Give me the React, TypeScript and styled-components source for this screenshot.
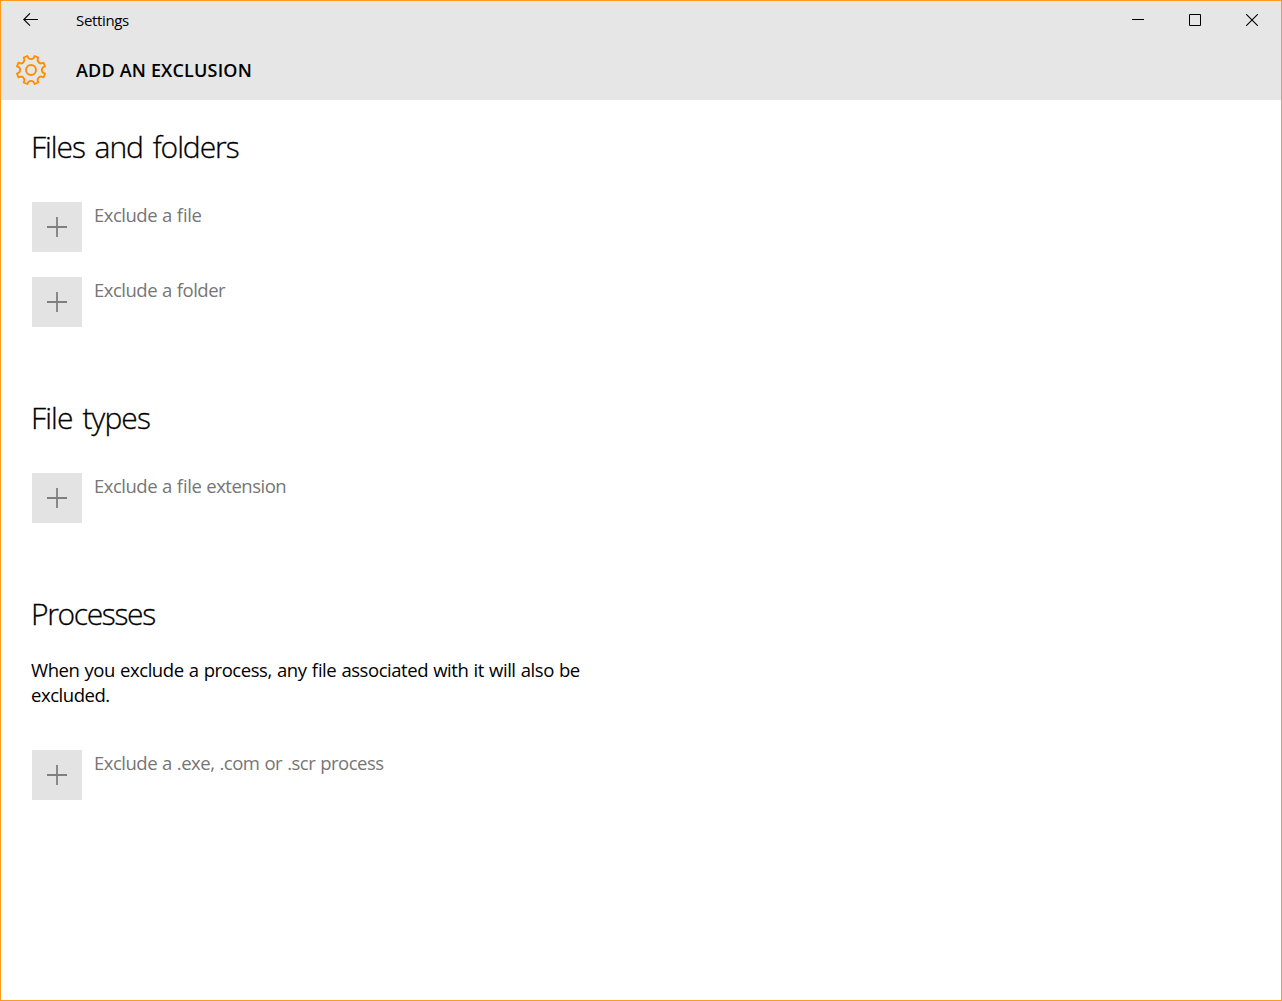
import { FC } from 'react';
import styled, { createGlobalStyle } from 'styled-components';

type ExclusionSection = {
  title: string;
  tracking: number;
  description?: string;
  actions: string[];
};

const sections: ExclusionSection[] = [
  {
    title: 'Files and folders',
    tracking: -1.05,
    actions: ['Exclude a file', 'Exclude a folder'],
  },
  {
    title: 'File types',
    tracking: -0.9,
    actions: ['Exclude a file extension'],
  },
  {
    title: 'Processes',
    tracking: -1.35,
    description:
      'When you exclude a process, any file associated with it will also be excluded.',
    actions: ['Exclude a .exe, .com or .scr process'],
  },
];

// eight teeth, with a rounded notch between each pair
const gearPath = () => {
  const point = (radius: number, degrees: number) => {
    const angle = (degrees * Math.PI) / 180;
    return `${(16 + radius * Math.sin(angle)).toFixed(2)} ${(
      16 -
      radius * Math.cos(angle)
    ).toFixed(2)}`;
  };
  const teeth = Array.from({ length: 8 }, (_, i) => {
    const a = i * 45 + 22.5;
    return `${point(14.5, a - 8)} L${point(14.5, a + 8)} L${point(
      11.9,
      a + 10.5
    )} Q${point(10, a + 22.5)} ${point(11.9, a + 34.5)}`;
  });
  return `M${teeth.join(' L')} Z`;
};

const GearIcon: FC = () => (
  <svg width="32" height="32" viewBox="0 0 32 32" fill="none">
    <path
      d={gearPath()}
      stroke="#ff8c00"
      strokeWidth="1.8"
      strokeLinejoin="round"
    />
    <circle cx="16" cy="16" r="5" stroke="#ff8c00" strokeWidth="1.9" />
  </svg>
);

const BackIcon: FC = () => (
  <svg width="16" height="14" viewBox="0 0 16 14" fill="none">
    <path d="M15 6.5H.8M7 .3L.8 6.5L7 12.7" stroke="#000" strokeWidth="1.1" />
  </svg>
);

const MinimizeIcon: FC = () => (
  <svg width="12" height="12" viewBox="0 0 12 12">
    <path d="M0 5.5H12" stroke="#000" />
  </svg>
);

const MaximizeIcon: FC = () => (
  <svg width="12" height="12" viewBox="0 0 12 12">
    <path d="M.5 .5H11.5V11.5H.5Z" stroke="#000" fill="none" />
  </svg>
);

const CloseIcon: FC = () => (
  <svg width="12" height="12" viewBox="0 0 12 12">
    <path d="M0 0L12 12M12 0L0 12" stroke="#000" strokeWidth="1.1" />
  </svg>
);

const PlusIcon: FC = () => (
  <svg width="20" height="20" viewBox="0 0 20 20">
    <path d="M0 10H20M10 0V20" stroke="#7f7f7f" strokeWidth="1.8" />
  </svg>
);

const App: FC = () => (
  <>
    <GlobalStyle />
    <StyledWindow>
      <StyledHeader>
        <StyledTitleBar>
          <StyledBackButton aria-label="Back">
            <BackIcon />
          </StyledBackButton>
          <StyledWindowTitle>Settings</StyledWindowTitle>
          <StyledCaptionButton aria-label="Minimize">
            <MinimizeIcon />
          </StyledCaptionButton>
          <StyledCaptionButton aria-label="Maximize">
            <MaximizeIcon />
          </StyledCaptionButton>
          <StyledCaptionButton aria-label="Close">
            <CloseIcon />
          </StyledCaptionButton>
        </StyledTitleBar>
        <StyledPageBar>
          <GearIcon />
          <StyledPageTitle>ADD AN EXCLUSION</StyledPageTitle>
        </StyledPageBar>
      </StyledHeader>
      <StyledContent>
        {sections.map((section) => (
          <StyledSection key={section.title}>
            <StyledSectionTitle $tracking={section.tracking}>
              {section.title}
            </StyledSectionTitle>
            {section.description && (
              <StyledDescription>{section.description}</StyledDescription>
            )}
            <StyledActionList>
              {section.actions.map((action) => (
                <StyledAction key={action}>
                  <StyledPlusTile>
                    <PlusIcon />
                  </StyledPlusTile>
                  <StyledActionLabel>{action}</StyledActionLabel>
                </StyledAction>
              ))}
            </StyledActionList>
          </StyledSection>
        ))}
      </StyledContent>
    </StyledWindow>
  </>
);

export default App;

const GlobalStyle = createGlobalStyle`
  * {
    box-sizing: border-box;
  }

  body {
    margin: 0;
    background: #fff;
    color: #000;
    font-family: 'Segoe UI', 'Open Sans', 'Noto Sans', sans-serif;
    font-feature-settings: 'liga' 1;
  }

  button {
    padding: 0;
    border: 0;
    background: none;
    color: inherit;
    font: inherit;
  }

  svg {
    display: block;
    flex: none;
  }
`;

const StyledWindow = styled.div`
  display: flex;
  flex-direction: column;
  height: 1001px;
  border: 1px solid #ff9a1f;
`;

const StyledHeader = styled.header`
  height: 99px;
  background: #e6e6e6;
`;

const StyledTitleBar = styled.div`
  display: flex;
  align-items: center;
  height: 38px;
  padding-right: 1px;
`;

const StyledBackButton = styled.button`
  display: flex;
  align-items: center;
  justify-content: center;
  width: 60px;
  height: 38px;
`;

const StyledWindowTitle = styled.div`
  flex: 1;
  padding-left: 15px;
  font-size: 15px;
  line-height: 38px;
  letter-spacing: -0.35px;
`;

const StyledCaptionButton = styled.button`
  display: flex;
  align-items: center;
  justify-content: center;
  width: 57px;
  height: 38px;
`;

const StyledPageBar = styled.div`
  display: flex;
  align-items: center;
  gap: 29px;
  height: 61px;
  padding-left: 14px;
`;

const StyledPageTitle = styled.h1`
  margin: 0;
  font-size: 18px;
  font-weight: 600;
  line-height: 24px;
  letter-spacing: 0.18px;
`;

const StyledContent = styled.main`
  width: 620px;
  padding: 27px 30px 0;
`;

const StyledSection = styled.section`
  margin-bottom: 71px;
`;

const StyledSectionTitle = styled.h2<{ $tracking: number }>`
  margin: 0;
  font-size: 30px;
  font-weight: 300;
  line-height: 40px;
  letter-spacing: ${({ $tracking }) => $tracking}px;
  word-spacing: 3px;
  -webkit-text-stroke: 0.3px #000;
`;

const StyledActionList = styled.div`
  display: flex;
  flex-direction: column;
  gap: 25px;
  margin-top: 35px;
  padding-left: 1px;
`;

const StyledDescription = styled.p`
  margin: 23px 0 0;
  font-size: 18.5px;
  line-height: 25px;
  letter-spacing: -0.45px;
  word-spacing: 0.8px;

  & + ${StyledActionList} {
    margin-top: 43px;
  }
`;

const StyledAction = styled.button`
  display: flex;
  gap: 12px;
  text-align: left;
`;

const StyledPlusTile = styled.span`
  display: flex;
  align-items: center;
  justify-content: center;
  width: 50px;
  height: 50px;
  background: #e3e3e3;
`;

const StyledActionLabel = styled.span`
  color: #767676;
  font-size: 18.5px;
  line-height: 25px;
  letter-spacing: -0.5px;
  word-spacing: 0.7px;
`;
